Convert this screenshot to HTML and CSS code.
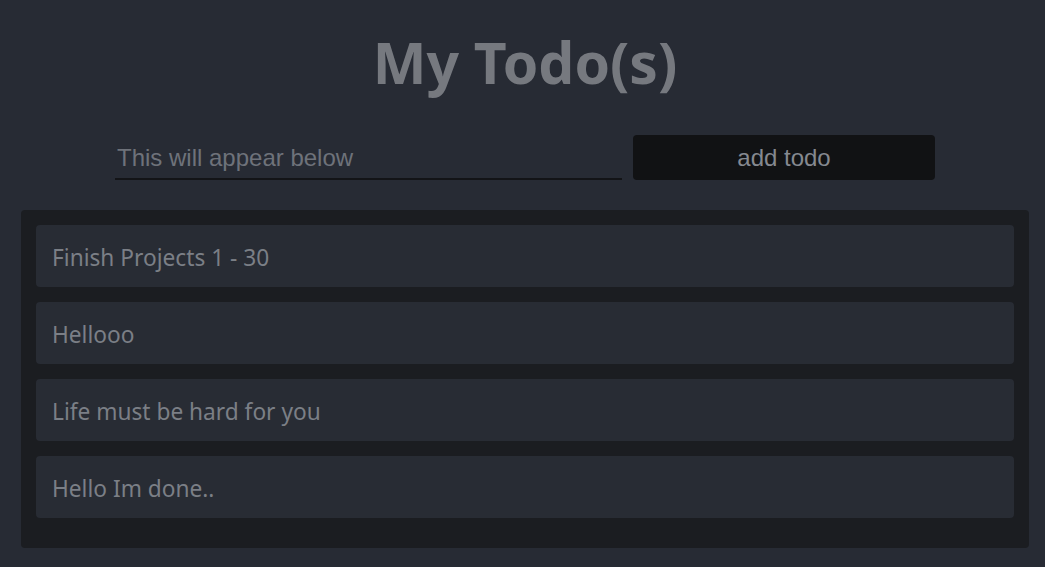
FILE: index.html
```html
<!DOCTYPE html>
<html>
<head>
<meta charset="utf-8">
<link rel="stylesheet" href="styles.css">
</head>
<body>
<h1 class="title">My Todo(s)</h1>
<form class="add-form">
  <input class="todo-input" type="text" placeholder="This will appear below">
  <button class="add-btn" type="button">add todo</button>
</form>
<ul class="todo-list">
  <li class="todo-item">Finish Projects 1 - 30</li>
  <li class="todo-item">Hellooo</li>
  <li class="todo-item">Life must be hard for you</li>
  <li class="todo-item">Hello Im done..</li>
</ul>
</body>
</html>
```
FILE: styles.css
```css
html, body {
  margin: 0;
  padding: 0;
  background: #272b34;
  height: 100%;
}
body {
  font-family: "Noto Sans", "Open Sans", sans-serif;
  overflow: hidden;
}
.title {
  margin: 0;
  padding-top: 26px;
  height: 74px;
  text-align: center;
  font-size: 57px;
  line-height: 72px;
  font-weight: 700;
  color: #76797f;
  padding-left: 5px;
}
.add-form {
  display: flex;
  justify-content: center;
  gap: 11px;
  margin-top: 35px;
  padding-left: 5px;
}
.todo-input {
  width: 507px;
  height: 45px;
  box-sizing: border-box;
  background: transparent;
  border: none;
  border-bottom: 2px solid #131417;
  font-family: "Liberation Sans", Arial, sans-serif;
  font-size: 24px;
  color: #7c8088;
  padding: 2px 2px 0;
  outline: none;
}
.todo-input::placeholder {
  color: #6e727a;
}
.add-btn {
  width: 302px;
  height: 45px;
  background: #111214;
  border: none;
  border-radius: 4px;
  font-family: "Liberation Sans", Arial, sans-serif;
  font-size: 24px;
  color: #858990;
}
.todo-list {
  list-style: none;
  margin: 30px 16px 0 21px;
  padding: 15px 15px 30px 15px;
  background: #1b1d21;
  border-radius: 4px;
  display: flex;
  flex-direction: column;
  gap: 15px;
}
.todo-item {
  height: 62px;
  box-sizing: border-box;
  background: #282c34;
  border-radius: 4px;
  padding-left: 16px;
  padding-top: 2px;
  display: flex;
  align-items: center;
  font-size: 22.7px;
  color: #7b7f86;
}
```
